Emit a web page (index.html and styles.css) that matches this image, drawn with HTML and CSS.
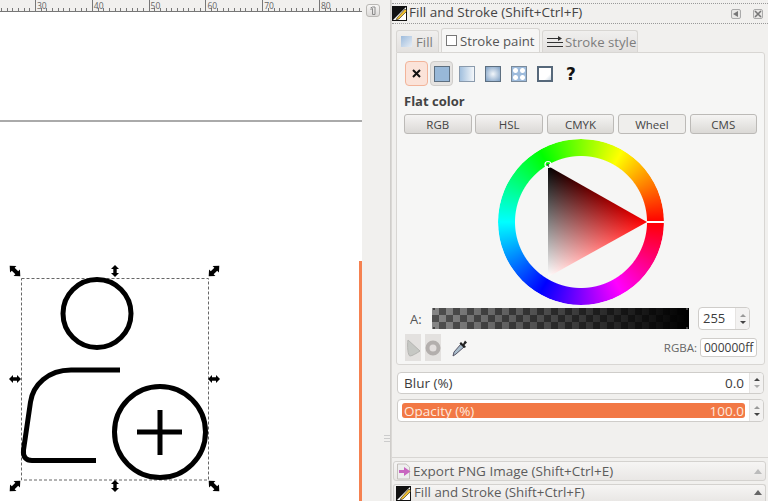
FILE: index.html
```html
<!DOCTYPE html>
<html lang="en">

<head>
    <meta charset="UTF-8">
    <title>Fill and Stroke</title>
    <link rel="stylesheet" href="styles.css">
</head>

<body>
    <div class="app">
        <div class="work">
            <div class="ruler">
                <span>30</span><span>40</span><span>50</span><span>60</span><span>70</span><span class="ruler-last">80</span>
            </div>
            <div class="canvas">
                <div class="page-line"></div>
                <div class="page-edge"></div>
                <svg class="drawing" width="362" height="489" viewBox="0 12 362 489">
                    <defs>
                        <path id="arrow" d="M-6 0L-2 -4V-1.700H2V-4L6 0L2 4V1.700H-2V4Z" />
                        <path id="arrow-big" d="M-7.500 0L-2.500 -4.500V-2H2.500V-4.500L7.500 0L2.500 4.500V2H-2.500V4.500Z" />
                    </defs>
                    <rect class="sel" x="21.500" y="278.500" width="187" height="201.500" />
                    <g class="ink">
                        <circle cx="97" cy="313.5" r="34" />
                        <path d="M120 370H71C48 370 33 385 30.500 402L23.500 450C22.800 457 26 460.500 32 460.500H96" />
                        <circle cx="160" cy="432" r="45.500" />
                        <path d="M137 432H182M160 410V455" />
                    </g>
                    <use href="#arrow-big" transform="translate(15 271) rotate(45)" />
                    <use href="#arrow-big" transform="translate(214 271) rotate(-45)" />
                    <use href="#arrow-big" transform="translate(15 486) rotate(-45)" />
                    <use href="#arrow-big" transform="translate(214 486) rotate(45)" />
                    <use href="#arrow" transform="translate(115 271) rotate(90)" />
                    <use href="#arrow" transform="translate(115 486) rotate(90)" />
                    <use href="#arrow" transform="translate(15 379)" />
                    <use href="#arrow" transform="translate(214 379)" />
                </svg>
            </div>
        </div>

        <div class="gutter">
            <button class="sticky"><svg width="8" height="10" viewBox="0 0 8 10">
                    <path d="M1.500 2L3.500 1H6V8.500H3.500V2.500L1.500 3.500" fill="none" stroke="#8a8a8a" />
                </svg></button>
            <div class="grip"></div>
        </div>

        <div class="panel">
            <div class="dock-title">
                <svg class="dock-icon" width="16" height="17" viewBox="0 0 16 17">
                    <rect x="0.500" y="1.500" width="14" height="14" fill="#fff" stroke="#111" />
                    <path d="M1 15L14 2H1Z" fill="#111" />
                    <path d="M5 13L13 4L15 6L7 14L4 15Z" fill="#f0c030" stroke="#222" stroke-width="0.600" />
                </svg>
                <span class="dock-name">Fill and Stroke (Shift+Ctrl+F)</span>
                <span class="dock-btn">
                    <svg width="8" height="8" viewBox="0 0 8 8"><path d="M6 1V7L1 4Z" fill="#777" /></svg>
                </span>
                <span class="dock-btn">
                    <svg width="8" height="8" viewBox="0 0 8 8"><path d="M1 1L7 7M7 1L1 7" stroke="#777" stroke-width="1.600" /></svg>
                </span>
            </div>

            <div class="tabs">
                <div class="tab fill-tab"><i class="swatch-fill"></i>Fill</div>
                <div class="tab tab-on stroke-tab"><i class="swatch-empty"></i>Stroke paint</div>
                <div class="tab style-tab">
                    <svg width="16" height="12" viewBox="0 0 16 12">
                        <path d="M0 2.500H11M0 6.500H16M0 10.500H16" stroke="#333" stroke-width="1.200" />
                        <path d="M11 0L15 2.500L11 5Z" fill="#333" />
                    </svg>
                    Stroke style
                </div>
            </div>

            <div class="tab-body">
                <div class="modes">
                    <div class="mode mode-none">
                        <svg width="9" height="9" viewBox="0 0 9 9"><path d="M1 1L8 8M8 1L1 8" stroke="#111" stroke-width="2" /></svg>
                    </div>
                    <div class="mode mode-on"><i class="paint paint-flat"></i></div>
                    <div class="mode"><i class="paint paint-linear"></i></div>
                    <div class="mode"><i class="paint paint-radial"></i></div>
                    <div class="mode"><i class="paint paint-mesh"></i></div>
                    <div class="mode"><i class="paint paint-pattern"></i></div>
                    <div class="mode mode-unset">?</div>
                </div>

                <div class="flat-label">Flat color</div>

                <div class="color-tabs">
                    <button class="color-tab">RGB</button>
                    <button class="color-tab">HSL</button>
                    <button class="color-tab">CMYK</button>
                    <button class="color-tab color-tab-on">Wheel</button>
                    <button class="color-tab">CMS</button>
                </div>

                <div class="wheel">
                    <div class="ring"></div>
                    <svg class="wheel-top" width="166" height="166" viewBox="0 0 166 166">
                        <defs>
                            <clipPath id="triClip">
                                <polygon points="50,27 149,83 50,138" />
                            </clipPath>
                            <linearGradient id="toRed" gradientUnits="userSpaceOnUse" x1="50" y1="0" x2="149" y2="0">
                                <stop offset="0" stop-color="#f00" stop-opacity="0" />
                                <stop offset="1" stop-color="#f00" />
                            </linearGradient>
                            <linearGradient id="toWhite" gradientUnits="userSpaceOnUse" x1="97.600" y1="53.900" x2="50" y2="138">
                                <stop offset="0" stop-color="#fff" stop-opacity="0" />
                                <stop offset="1" stop-color="#fff" />
                            </linearGradient>
                        </defs>
                        <g class="tri" clip-path="url(#triClip)">
                            <rect x="40" y="20" width="120" height="125" fill="#000" />
                            <rect class="add" x="40" y="20" width="120" height="125" fill="url(#toRed)" />
                            <rect class="add" x="40" y="20" width="120" height="125" fill="url(#toWhite)" />
                        </g>
                        <rect x="149" y="82" width="17" height="2" fill="#fff" />
                        <circle cx="50" cy="25.500" r="3" fill="none" stroke="#fff" stroke-width="1.200" />
                        <circle cx="50" cy="26" r="1" fill="#333" />
                    </svg>
                </div>

                <div class="alpha-row">
                    <span class="alpha-label">A:</span>
                    <div class="alpha-bar"></div>
                    <div class="spin alpha-spin">
                        <span class="spin-value">255</span>
                        <span class="stepper"><i class="up"></i><i class="down"></i></span>
                    </div>
                </div>

                <div class="tool-row">
                    <span class="tool">
                        <svg width="16" height="20" viewBox="0 0 16 20"><path d="M3 2L15 13C12 15 7 18 5 18C3 18 2 8 3 2Z" fill="#c6c8c4" stroke="#b5b5b2" /></svg>
                    </span>
                    <span class="tool">
                        <svg width="16" height="16" viewBox="0 0 16 16">
                            <circle cx="8" cy="8" r="5.500" fill="#e2dedd" stroke="#b3afad" stroke-width="4" />
                        </svg>
                    </span>
                    <svg class="dropper" width="16" height="18" viewBox="0 0 16 18">
                        <path d="M1 17L2 13L9 5L12 8L4 15Z" fill="#a9bdcc" stroke="#556" stroke-width="1" />
                        <path d="M9 3L11 5L13 1.500L15 3.500L12.500 6L14 8L12 9L7.500 4.500Z" fill="#222" />
                    </svg>
                    <span class="rgba-label">RGBA:</span>
                    <span class="rgba-input">000000ff</span>
                </div>
            </div>

            <div class="spin slider">
                <div class="slider-fill"><span>Blur (%)</span><span>0.0</span></div>
                <span class="stepper stepper-low"><i class="up"></i><i class="down"></i></span>
            </div>
            <div class="spin slider slider-opacity">
                <div class="slider-fill opacity-fill"><span>Opacity (%)</span><span>100.0</span></div>
                <span class="stepper"><i class="up"></i><i class="down"></i></span>
            </div>

            <div class="panel-space"></div>

            <div class="dock-tab">
                <svg class="dock-tab-icon" width="16" height="17" viewBox="0 0 16 17">
                    <path d="M1.500 1H10L13.500 4V16H1.500Z" fill="#eee" stroke="#c4c0bc" />
                    <path d="M3 7H8V4L14.500 8.500L8 13V10H3Z" fill="#c866c0" />
                </svg>
                <span>Export PNG Image (Shift+Ctrl+E)</span>
                <i class="dock-arrow dock-arrow-pale"></i>
            </div>
            <div class="dock-tab dock-tab-last">
                <svg class="dock-tab-icon" width="16" height="17" viewBox="0 0 16 17">
                    <rect x="0.500" y="1.500" width="14" height="14" fill="#fff" stroke="#111" />
                    <path d="M1 15L14 2H1Z" fill="#111" />
                    <path d="M5 13L13 4L15 6L7 14L4 15Z" fill="#f0c030" stroke="#222" stroke-width="0.600" />
                </svg>
                <span>Fill and Stroke (Shift+Ctrl+F)</span>
                <i class="dock-arrow"></i>
            </div>
        </div>
    </div>
</body>

</html>
```

FILE: styles.css
```css
* {
    margin: 0;
    padding: 0;
    box-sizing: border-box;
}

html,
body {
    height: 501px;
    overflow: hidden;
}

body {
    font-family: "Open Sans", "Noto Sans", sans-serif;
    font-size: 13px;
    color: #3c3c3c;
    background-color: #f1f0ee;
}

i {
    display: block;
}

.app {
    display: flex;
    height: 501px;
}

/* left side */
.work {
    width: 362px;
    display: flex;
    flex-direction: column;
}

.ruler {
    height: 12px;
    display: flex;
    padding-left: 35px;
    border-bottom: 1px solid #777;
    background-color: #f1f0ee;
    background-image: repeating-linear-gradient(to right, #777 0, #777 1px, transparent 1px, transparent 5.68px);
    background-size: 100% 3px;
    background-position: 1px 100%;
    background-repeat: no-repeat;
}

.ruler span {
    flex: 0 0 56.8px;
    border-left: 1px solid #777;
    padding-left: 1px;
    font-size: 8.500px;
    line-height: 11px;
    color: #666;
}

.ruler .ruler-last {
    flex-basis: 43px;
}

.canvas {
    flex: 1;
    position: relative;
    background-color: #fff;
}

.page-line {
    position: absolute;
    left: 0;
    right: 0;
    top: 108px;
    height: 2px;
    background-color: #aaa;
}

.page-edge {
    position: absolute;
    right: 0;
    top: 249px;
    bottom: 0;
    width: 3px;
    background-color: #f58150;
}

.drawing {
    position: absolute;
    left: 0;
    top: 0;
}

.sel {
    fill: none;
    stroke: #666;
    stroke-width: 1;
    stroke-dasharray: 3 2;
}

.ink {
    fill: none;
    stroke: #000;
    stroke-width: 5;
}

.gutter {
    width: 29px;
    display: flex;
    flex-direction: column;
    align-items: flex-start;
    padding: 4px 0 0 4px;
    border-right: 1px solid #cfcdca;
}

.sticky {
    width: 14px;
    height: 13px;
    display: flex;
    align-items: center;
    justify-content: center;
    border: 1px solid #b9b7b4;
    border-radius: 3px;
    background: linear-gradient(#f7f6f5, #dcdad8);
}

.grip {
    width: 6px;
    height: 7px;
    margin: 418px 0 0 18px;
    border-top: 1px solid #ccc;
    border-bottom: 1px solid #ccc;
    background: linear-gradient(#ccc, #ccc) 0 50%/100% 1px no-repeat;
}

/* right side */
.panel {
    flex: 1;
    min-width: 0;
    display: flex;
    flex-direction: column;
    border-left: 1px solid #dad8d5;
}

.dock-title {
    height: 21px;
    margin-top: 3px;
    display: flex;
    align-items: center;
    border-top: 1px dotted #999;
    border-bottom: 1px dotted #999;
    color: #444;
}

.dock-icon {
    flex: none;
}

.dock-name {
    margin-left: 1px;
    padding-bottom: 3px;
    flex: 1;
    font-size: 13.500px;
    white-space: nowrap;
}

.dock-btn {
    width: 10px;
    height: 10px;
    margin-right: 12px;
    display: flex;
    align-items: center;
    justify-content: center;
    border: 1px solid #aaa;
    border-radius: 2px;
    background-color: #e8e7e5;
}

.dock-btn:last-child {
    margin-right: 5px;
}

.tabs {
    height: 24px;
    margin-top: 4px;
    padding-left: 4px;
    display: flex;
    align-items: flex-end;
    gap: 2px;
}

.tab {
    height: 22px;
    display: flex;
    align-items: center;
    padding-left: 4px;
    border: 1px solid #d8d6d3;
    border-bottom: none;
    border-radius: 3px 3px 0 0;
    background: linear-gradient(#f0efee, #e3e1df);
    color: #7d7d7d;
    font-size: 13.200px;
    white-space: nowrap;
}

.fill-tab {
    width: 43px;
}

.stroke-tab {
    width: 99px;
}

.style-tab {
    width: 96px;
    gap: 2px;
}

.tab-on {
    height: 24px;
    background: #f6f6f5;
    color: #555;
}

.swatch-fill {
    width: 11px;
    height: 11px;
    margin-right: 4px;
    background: linear-gradient(135deg, #9dbbdc, #e6edf5);
}

.swatch-empty {
    width: 11px;
    height: 11px;
    margin-right: 3px;
    border: 1px solid #777;
    background-color: #fff;
}

.tab-body {
    width: 369px;
    height: 313px;
    margin-left: 4px;
    padding: 8px 7px 0 7px;
    border: 1px solid #d8d6d3;
    border-radius: 0 3px 3px 3px;
    background-color: #f6f6f5;
}

.modes {
    height: 25px;
    padding-left: 1px;
    display: flex;
    align-items: center;
}

.mode {
    width: 26px;
    height: 25px;
    display: flex;
    align-items: center;
    justify-content: center;
    flex: none;
}

.mode-none {
    width: 23px;
    border: 1px solid #f2b49a;
    border-radius: 4px;
    background-color: #fbe3d9;
}

.mode-on {
    width: 23px;
    margin: 0 1px 0 2px;
    border: 1px solid #cfcdca;
    border-radius: 4px;
    background-color: #e5e3e1;
}

.mode-unset {
    font-family: "DejaVu Sans", sans-serif;
    font-size: 17px;
    font-weight: bold;
    color: #111;
}

.paint {
    width: 16px;
    height: 16px;
    border: 1px solid #5d6f80;
}

.paint-flat {
    background-color: #98b8d8;
}

.paint-linear {
    border-color: #8a9aac;
    background: linear-gradient(to right, #a2c0de, #f4f7fa);
}

.paint-radial {
    background: radial-gradient(circle, #f2f6fa, #7d9fc4);
}

.paint-mesh {
    border-color: #7a8a9a;
    background:
        radial-gradient(circle, #fff 0 2px, transparent 3px) 0 0/7px 7px,
        #9dbbdc;
}

.paint-pattern {
    border: 2px solid #56687a;
    background: linear-gradient(135deg, #fff 70%, #c9d6e2);
}

.flat-label {
    margin-top: 6px;
    height: 18px;
    font-weight: 700;
    font-size: 13px;
    line-height: 18px;
    color: #444;
}

.color-tabs {
    margin-top: 4px;
    display: flex;
    justify-content: space-between;
    width: 353px;
}

.color-tab {
    width: 67.500px;
    height: 20px;
    border: 1px solid #bcbab7;
    border-radius: 3px;
    background: linear-gradient(#f5f4f3, #dbd9d6);
    font: 11.500px "Open Sans", "Noto Sans", sans-serif;
    color: #444;
}

.color-tab-on {
    background: #efeeec;
}

.wheel {
    position: relative;
    width: 166px;
    height: 166px;
    margin: 5px auto 0;
}

.ring {
    width: 166px;
    height: 166px;
    border-radius: 50%;
    background: conic-gradient(from 90deg, #f00, #f0f, #00f, #0ff, #0f0, #ff0, #f00);
    -webkit-mask: radial-gradient(circle, transparent 65.500px, #000 66.500px);
    mask: radial-gradient(circle, transparent 65.500px, #000 66.500px);
}

.wheel-top {
    position: absolute;
    left: 0;
    top: 0;
}

.tri {
    isolation: isolate;
}

.add {
    mix-blend-mode: plus-lighter;
}

.alpha-row {
    height: 23px;
    margin-top: 2px;
    display: flex;
    align-items: center;
}

.alpha-label {
    width: 28px;
    padding-left: 6px;
    font-size: 13px;
    color: #555;
}

.alpha-bar {
    width: 257px;
    height: 23px;
    padding: 1px 0;
    background:
        radial-gradient(circle, #444 0 1px, transparent 1.500px) 0 0/4px 4px no-repeat border-box,
        radial-gradient(circle, #444 0 1px, transparent 1.500px) 100% 0/4px 4px no-repeat border-box,
        radial-gradient(circle, #444 0 1px, transparent 1.500px) 0 100%/4px 4px no-repeat border-box,
        radial-gradient(circle, #444 0 1px, transparent 1.500px) 100% 100%/4px 4px no-repeat border-box,
        linear-gradient(to right, rgba(0, 0, 0, 0.25), #000) content-box,
        repeating-conic-gradient(#6a6a6a 0 25%, #b4b4b4 0 50%) 0 0/14px 14px content-box;
}

.spin {
    display: flex;
    align-items: stretch;
    border: 1px solid #cfcdca;
    border-radius: 4px;
    background-color: #fff;
}

.alpha-spin {
    width: 52px;
    height: 23px;
    margin-left: 9px;
}

.spin-value {
    flex: 1;
    padding-left: 4px;
    font-size: 13px;
    line-height: 20px;
}

.stepper {
    width: 14px;
    flex: none;
    display: flex;
    flex-direction: column;
    align-items: center;
    justify-content: center;
    gap: 4px;
    border-left: 1px solid #e6e4e2;
    background-color: #f3f2f1;
    border-radius: 0 4px 4px 0;
}

.up {
    border: 3px solid transparent;
    border-top: none;
    border-bottom: 3px solid #999;
}

.down {
    border: 3px solid transparent;
    border-bottom: none;
    border-top: 3px solid #444;
}

.stepper-low .up {
    border-bottom-color: #444;
}

.stepper-low .down {
    border-top-color: #aaa;
}

.tool-row {
    height: 27px;
    margin-top: 4px;
    padding-left: 1px;
    display: flex;
    align-items: center;
}

.tool {
    width: 16px;
    height: 27px;
    margin-right: 4px;
    display: flex;
    align-items: center;
    justify-content: center;
    background-color: #e3e1df;
}

.dropper {
    margin-left: 7px;
}

.rgba-label {
    margin-left: auto;
    font-size: 11.500px;
    color: #666;
}

.rgba-input {
    width: 57px;
    height: 19px;
    margin: 0 0 0 3px;
    padding-left: 3px;
    border: 1px solid #cfcdca;
    border-radius: 3px;
    background-color: #fff;
    font-size: 12px;
    line-height: 17px;
}

.slider {
    width: 367px;
    height: 22px;
    margin: 7px 0 0 5px;
}

.slider-opacity {
    height: 23px;
    margin-top: 5px;
}

.slider-fill {
    flex: 1;
    display: flex;
    align-items: center;
    justify-content: space-between;
    padding: 0 5px 0 6px;
    font-size: 13.500px;
}

.opacity-fill {
    margin: 3px 4px;
    padding: 0 1px 0 2px;
    border-radius: 3px;
    background-color: #f27845;
    color: #fde9df;
}

.panel-space {
    flex: 1;
    border-bottom: 1px solid #d8d6d3;
}

.dock-tab {
    height: 20px;
    margin: 3px 2px 0 1px;
    display: flex;
    align-items: center;
    gap: 1px;
    padding-left: 2px;
    border: 1px solid #d4d2cf;
    border-radius: 3px;
    background: linear-gradient(#f6f5f4, #e9e7e5);
    font-size: 13.500px;
    color: #5c5c5c;
    white-space: nowrap;
}

.dock-tab-last {
    height: 17px;
    gap: 2px;
    border-bottom: none;
    border-radius: 3px 3px 0 0;
    align-items: flex-start;
    font-size: 13.300px;
}

.dock-tab span {
    flex: 1;
}

.dock-tab-last span {
    margin-top: -2px;
}

.dock-arrow {
    margin-right: 3px;
    border: 4px solid transparent;
    border-top: none;
    border-bottom: 5px solid #666;
}

.dock-arrow-pale {
    border-bottom-color: #bbb;
}

.dock-tab-last .dock-arrow {
    margin-top: 5px;
}
```
